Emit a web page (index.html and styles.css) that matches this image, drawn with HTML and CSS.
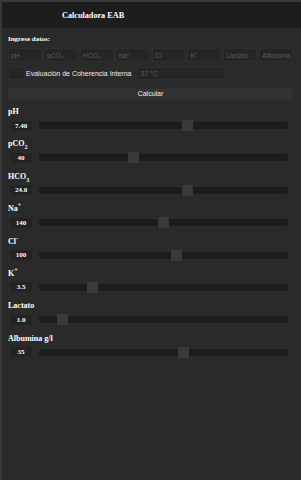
FILE: index.html
```html
<!DOCTYPE html>
<html lang="es">
<head>
  <meta charset="UTF-8" />
  <meta name="viewport" content="width=device-width, initial-scale=1.0"/>
  <title>Calculadora EAB</title>
  <link rel="stylesheet" href="styles.css">
</head>
<body>
  <div class="app">
    <header>
      <h1>Calculadora EAB</h1>
    </header>

    <main class="content">
      <h2>Ingrese datos:</h2>
      <div class="inputs">
        <input type="text" placeholder="pH" />
        <input type="text" placeholder="pCO₂" />
        <input type="text" placeholder="HCO₃" />
        <input type="text" placeholder="Na⁺" />
        <input type="text" placeholder="Cl⁻" />
        <input type="text" placeholder="K⁺" />
        <input type="text" placeholder="Lactato" />
        <input type="text" placeholder="Albumina" />
      </div>

      <div class="options">
        <input type="checkbox" class="check" id="coherencia" />
        <label for="coherencia" class="check-label">Evaluación de Coherencia Interna</label>
        <input type="text" class="temp" placeholder="37 °C" />
      </div>

      <button class="calc">Calcular</button>

      <div class="field">
        <div class="field-name">pH</div>
        <div class="field-row">
          <span class="value">7.40</span>
          <input type="range" min="6.8" max="7.8" step="0.01" value="7.40" />
        </div>
      </div>

      <div class="field">
        <div class="field-name">pCO<sub>2</sub></div>
        <div class="field-row">
          <span class="value">40</span>
          <input type="range" min="10" max="90" value="40" />
        </div>
      </div>

      <div class="field">
        <div class="field-name">HCO<sub>3</sub></div>
        <div class="field-row">
          <span class="value">24.0</span>
          <input type="range" min="0" max="40" step="0.1" value="24" />
        </div>
      </div>

      <div class="field">
        <div class="field-name">Na<sup>+</sup></div>
        <div class="field-row">
          <span class="value">140</span>
          <input type="range" min="100" max="180" value="140" />
        </div>
      </div>

      <div class="field">
        <div class="field-name">Cl<sup>-</sup></div>
        <div class="field-row">
          <span class="value">100</span>
          <input type="range" min="70" max="124" value="100" />
        </div>
      </div>

      <div class="field">
        <div class="field-name">K<sup>+</sup></div>
        <div class="field-row">
          <span class="value">3.5</span>
          <input type="range" min="2" max="9.5" step="0.1" value="3.5" />
        </div>
      </div>

      <div class="field">
        <div class="field-name">Lactato</div>
        <div class="field-row">
          <span class="value">1.0</span>
          <input type="range" min="0" max="13" step="0.1" value="1" />
        </div>
      </div>

      <div class="field">
        <div class="field-name">Albumina g/l</div>
        <div class="field-row">
          <span class="value">35</span>
          <input type="range" min="0" max="60" value="35" />
        </div>
      </div>
    </main>
  </div>
</body>
</html>
```

FILE: styles.css
```css
html, body {
  margin: 0;
  height: 100%;
  background: #2a2a2a;
}
.app {
  min-height: 100%;
  box-sizing: border-box;
  border-top: 2px solid #3a3a3a;
  border-left: 2px solid #383838;
  background: #2a2a2a;
  color: #fff;
  font-family: "Liberation Serif", serif;
}
header {
  background: #1d1d1d;
  height: 26px;
  padding-left: 60px;
  display: flex;
  align-items: center;
}
h1 {
  margin: 0;
  font-size: 8.2px;
  font-weight: bold;
}
.content {
  padding: 6px 8px 0 6px;
}
h2 {
  margin: 0 0 4px;
  font-size: 7px;
  line-height: 10px;
  font-weight: bold;
}
.inputs {
  display: grid;
  grid-template-columns: repeat(8, 1fr);
  gap: 2px;
}
input[type="text"] {
  min-width: 0;
  box-sizing: border-box;
  height: 14px;
  margin: 0;
  padding: 0 1px 0 2px;
  background: #252525;
  border: 1px solid #2e2e2e;
  color: #ddd;
  font-family: "Liberation Sans", sans-serif;
  font-size: 6.8px;
}
input[type="text"]::placeholder {
  color: #5c5c5c;
}
.options {
  display: flex;
  align-items: center;
  margin-top: 5px;
  height: 13px;
}
.check {
  appearance: none;
  margin: 0;
  width: 17px;
  height: 13px;
  background: #252525;
  border: 1px solid #2e2e2e;
  box-sizing: border-box;
}
.check-label {
  font-family: "Liberation Sans", sans-serif;
  font-size: 7px;
  color: #eee;
  padding: 0 6px 0 1px;
}
.temp {
  width: 88px;
  height: 13px !important;
}
.calc {
  display: block;
  width: 100%;
  height: 12px;
  margin: 8px 0 7px;
  padding: 0;
  background: #333;
  border: 1px solid #2e2e2e;
  color: #eee;
  font-family: "Liberation Sans", sans-serif;
  font-size: 7px;
  line-height: 10px;
}
.field {
  margin-bottom: 8.4px;
}
.field-name {
  font-size: 8px;
  font-weight: bold;
  line-height: 10px;
  height: 10px;
  margin-bottom: 3px;
}
.field-name sub, .field-name sup {
  font-size: 6px;
  line-height: 0;
}
.field-row {
  display: flex;
  align-items: center;
  height: 11px;
  padding-right: 5px;
}
.value {
  width: 22px;
  height: 10px;
  line-height: 10px;
  background: #232323;
  font-size: 7px;
  font-weight: bold;
  text-align: center;
  margin-left: 2px;
}
input[type="range"] {
  appearance: none;
  flex: 1;
  margin: 0 0 0 7px;
  height: 7px;
  background: #1c1c1c;
  border-radius: 2px;
}
input[type="range"]::-webkit-slider-thumb {
  appearance: none;
  width: 11px;
  height: 11px;
  background: #3a3a3a;
  border-radius: 1px;
}
```
